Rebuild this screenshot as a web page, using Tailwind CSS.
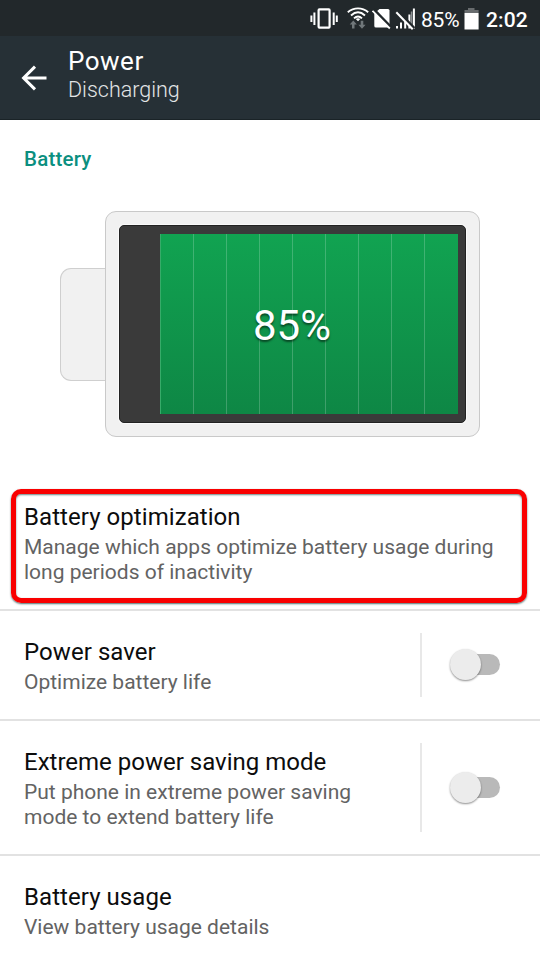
<!DOCTYPE html>
<html lang="en">
<head>
<meta charset="utf-8">
<title>Power</title>
<script src="https://cdn.jsdelivr.net/npm/@tailwindcss/browser@4"></script>
</head>
<body class="w-[540px] h-[960px] overflow-hidden bg-white font-['Roboto',sans-serif] text-[#0c0c0c]">
<div class="h-9 bg-[#22282b] flex items-center text-white">
  <svg class="ml-[310px] w-[29px] h-9 shrink-0" viewBox="0 0 29 36" fill="none" stroke="#fff">
    <rect x="8.6" y="9.4" width="11" height="18.2" rx="0.8" stroke-width="2.2"/>
    <path d="M1.4 15.500v6.500M4.400 12.500v12.500M23.700 12.500v12.500M26.800 15.500v6.500" stroke-width="2"/>
  </svg>
  <svg class="ml-[7px] w-6 h-9 shrink-0" viewBox="0 0 24 36" fill="none">
    <path d="M1.800 12.300C7.800 7.100 16.200 7.100 22.200 12.300M5 15.500C9.400 11.500 14.600 11.500 19 15.500M8 18.400C10.500 16 13.500 16 16 18.400" stroke="#fff" stroke-width="1.900"/>
    <path d="M9.800 18.900Q12 17.600 14.200 18.900L12 21.200Z" fill="#fff"/>
    <path d="M7.300 20.500l3.600 4h-2.400v4H6v-4H3.700zM16 28.800l3.600-4h-2.300v-4h-2.600v4h-2.300z" fill="#70777a"/>
  </svg>
  <svg class="ml-[2px] w-5 h-9 shrink-0" viewBox="0 0 20 36">
    <path d="M7.500 9H16Q17.500 9 17.500 10.500V26Q17.500 27.500 16 27.500H4Q2.300 27.500 2.300 26V13.500Z" fill="#fff"/>
    <path d="M2 9.700L19.200 27.500" stroke="#22282b" stroke-width="3"/>
    <path d="M.5 10.800L17.800 28.500" stroke="#fff" stroke-width="1.800"/>
  </svg>
  <svg class="ml-[2px] w-[24px] h-9 shrink-0" viewBox="0 0 24 36">
    <path d="M3 26v2.500M7 22.500v6M11.200 19v9.500M15.400 14.500v14M19.900 8.500v20" stroke="#fff" stroke-width="2"/>
    <path d="M17.600 11.500v17" stroke="#8b9092" stroke-width="1.600"/>
    <path d="M3.800 11.400L20.200 28.300" stroke="#22282b" stroke-width="3"/>
    <path d="M2.300 12.300L18.700 29.200" stroke="#fff" stroke-width="2"/>
  </svg>
  <span class="ml-[3px] w-[43px] shrink-0 text-[21px] leading-9 pt-[3px] tracking-[-0.2px] whitespace-nowrap">85%</span>
  <svg class="w-4 h-9 shrink-0" viewBox="0 0 16 36"><path d="M.5 10H4V8H10.500V10H14.600V13H.5Z" fill="#686c6e"/><path d="M.5 13H14.600V29.500H.5Z" fill="#fff"/></svg>
  <span class="ml-[6px] text-[21px] font-medium leading-9 pt-[3px] tracking-[0.1px] whitespace-nowrap">2:02</span>
</div>
<header class="h-[84px] bg-[#263036] border-b border-[#1a2327] flex text-white">
  <svg class="ml-[20px] mt-[29px] w-7 h-[27px]" viewBox="0 0 28 27" fill="none" stroke="#fff" stroke-width="3"><path d="M15 1.600L3.600 13L15 24.400M3.600 13H26.500"/></svg>
  <div class="ml-[20px] pt-[10px]">
    <h1 class="text-[26px] leading-[30px] tracking-[0.5px]">Power</h1>
    <p class="text-[21.5px] leading-[25px] mt-px text-[#e3e5e6] font-light">Discharging</p>
  </div>
</header>
<main>
  <h2 class="h-[91px] pl-6 pt-[26px] text-[20.5px] leading-[26px] font-medium text-[#0b8f7f] tracking-[0.2px]"><span>Battery</span></h2>
  <section class="flex items-center h-[226px] pl-[60px]">
    <div class="w-[45px] h-[113px] bg-[#f1f1f1] border border-r-0 border-[#cfcfcf] rounded-l-[11px]"></div>
    <div class="w-[375px] h-[226px] bg-[#f1f1f1] border border-[#c9c9c9] rounded-[11px] p-[13px]">
      <div class="h-[198px] bg-[#3a3a3a] border border-[#222] rounded-[5px] pl-[40px] pr-[7px] pt-[8px] pb-[8px] shadow-[0_0_0_1px_#fafafa]">
        <div class="relative h-[180px] flex bg-linear-to-b from-[#11a351] to-[#0e8745] border-l border-[#37ab69]">
          <i class="w-[33px] border-r border-white/20"></i><i class="w-[33px] border-r border-white/20"></i><i class="w-[33px] border-r border-white/20"></i><i class="w-[33px] border-r border-white/20"></i><i class="w-[33px] border-r border-white/20"></i><i class="w-[33px] border-r border-white/20"></i><i class="w-[33px] border-r border-white/20"></i><i class="w-[33px] border-r border-white/20"></i>
          <span class="absolute left-[92px] top-[67px] text-[42px] leading-[50px] text-white [text-shadow:0_2px_2px_rgba(0,0,0,0.5)]">85%</span>
        </div>
      </div>
    </div>
  </section>
  <section class="relative mt-[39px] h-[135px] border-b-2 border-[#e2e2e2] pl-6 pt-[27px]">
    <h3 class="text-[24px] leading-7 tracking-[0.06px]">Battery optimization</h3>
    <p class="mt-[4px] text-[21px] leading-[25px] text-[#636363]">Manage which apps optimize battery usage during<br>long periods of inactivity</p>
    <div class="absolute left-[11px] top-[12.5px] w-[516px] h-[114px] border-[5px] border-[#f90000] rounded-[10px] shadow-[0_1px_2px_rgba(0,50,50,0.7),inset_0_1px_2px_rgba(0,50,50,0.6)]"></div>
  </section>
  <section class="h-[110px] border-b-2 border-[#e2e2e2] flex">
    <div class="w-[420px] pl-6 pt-[27px]">
      <h3 class="text-[24px] leading-7 tracking-[0.06px]">Power saver</h3>
      <p class="mt-[4px] text-[21px] leading-[25px] text-[#636363]">Optimize battery life</p>
    </div>
    <div class="w-[2px] my-[22px] bg-[#e8e8e8]"></div>
    <div class="flex items-center pl-[28px]">
      <div class="w-[31px] h-[31px] -mt-px rounded-full bg-[#ececec] z-10 shadow-[0_1px_2px_rgba(0,0,0,0.45)]"></div>
      <div class="-ml-[16px] w-[35px] h-[21px] -mt-px rounded-full bg-[#b9b9b9]"></div>
    </div>
  </section>
  <section class="h-[135px] border-b-2 border-[#e2e2e2] flex">
    <div class="w-[420px] pl-6 pt-[27px]">
      <h3 class="text-[24px] leading-7">Extreme power saving mode</h3>
      <p class="mt-[4px] text-[21px] leading-[25px] text-[#636363]">Put phone in extreme power saving<br>mode to extend battery life</p>
    </div>
    <div class="w-[2px] my-[22px] bg-[#e8e8e8]"></div>
    <div class="flex items-center pl-[28px]">
      <div class="w-[31px] h-[31px] rounded-full bg-[#ececec] z-10 shadow-[0_1px_2px_rgba(0,0,0,0.45)]"></div>
      <div class="-ml-[16px] w-[35px] h-[21px] rounded-full bg-[#b9b9b9]"></div>
    </div>
  </section>
  <section class="pl-6 pt-[27px]">
    <h3 class="text-[24px] leading-7 tracking-[0.06px]">Battery usage</h3>
    <p class="mt-[4px] text-[21px] leading-[25px] text-[#636363]">View battery usage details</p>
  </section>
</main>
</body>
</html>
